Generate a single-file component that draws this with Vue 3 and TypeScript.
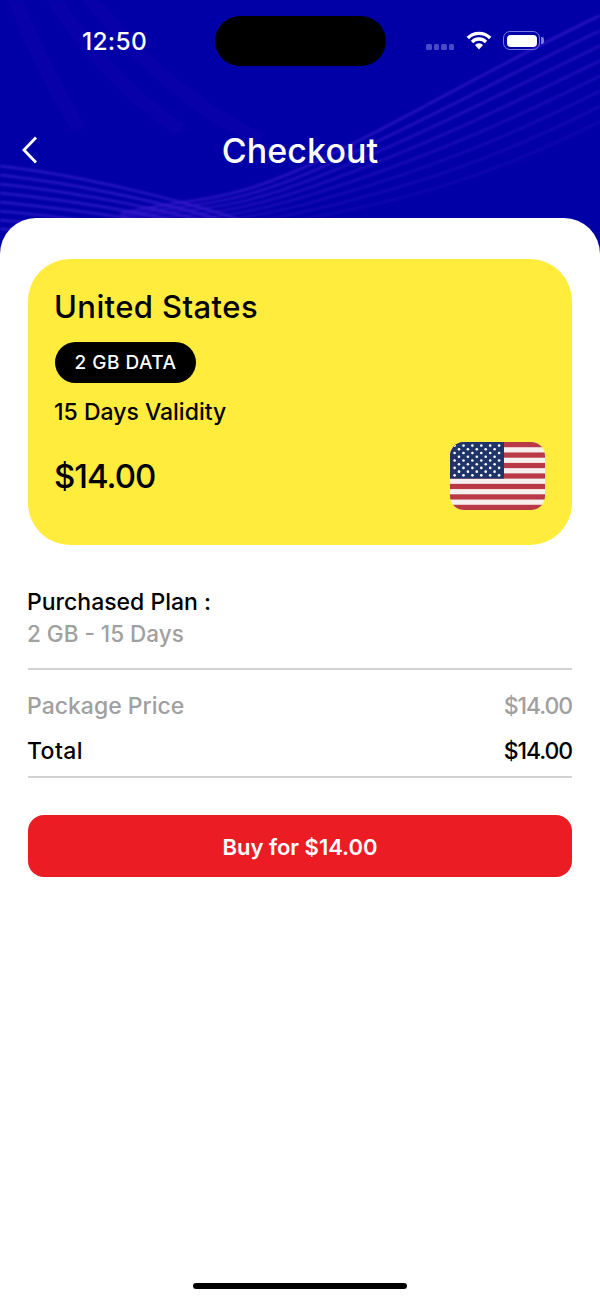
<script setup lang="ts">
const leftLines: string[] = [];
for (let i = 0; i < 8; i++) {
  leftLines.push(`M-10 ${165 + i * 9} C 60 ${172 + i * 9}, 180 ${196 + i * 6}, 300 ${240 + i * 5}`);
}
const rightLines: string[] = [];
for (let i = 0; i < 8; i++) {
  rightLines.push(`M620 ${6 + i * 15} C 500 ${62 + i * 16}, 420 ${112 + i * 12}, 320 ${160 + i * 8} S 190 ${196 + i * 5}, 120 ${214 + i * 3}`);
}
const topBands = [
  'M12 -10 C 30 40, 50 80, 80 130',
  'M48 -10 C 80 40, 120 90, 180 130',
  'M84 -10 C 130 50, 180 100, 260 140',
];
const stripes = [0, 2, 4, 6, 8, 10, 12].map((i) => (i * 68) / 13);
const stars: { x: number; y: number }[] = [];
for (let r = 0; r < 9; r++) {
  const n = r % 2 === 0 ? 6 : 5;
  for (let c = 0; c < n; c++) {
    stars.push({ x: (r % 2 === 0 ? 4.6 : 9) + c * 8.9, y: 3.6 + r * 3.72 });
  }
}
</script>

<template>
  <div class="page">
    <svg class="waves" viewBox="0 0 600 260" width="600" height="260" aria-hidden="true">
      <path v-for="(d, i) in topBands" :key="'t' + i" :d="d" fill="none" stroke="#3a08c0" stroke-width="14" stroke-opacity=".13" />
      <path v-for="(d, i) in leftLines" :key="'l' + i" :d="d" fill="none" stroke="#4a2ae0" stroke-width="2.4" stroke-opacity=".55" />
      <path v-for="(d, i) in rightLines" :key="'r' + i" :d="d" fill="none" stroke="#4a20d8" stroke-width="2.6" :stroke-opacity="0.55 - i * 0.05" />
    </svg>
    <header class="top">
      <div class="status">
        <span class="time">12:50</span>
        <div class="island"></div>
        <div class="status-icons">
          <span class="signal"><i></i><i></i><i></i><i></i></span>
          <svg class="wifi" width="26" height="19" viewBox="0 0 26 19">
            <path d="M1.8 7 A15.8 15.8 0 0 1 24.2 7 M6 11 A9.8 9.8 0 0 1 20 11" fill="none" stroke="#fff" stroke-width="3.4" />
            <path d="M9 14 A5.6 5.6 0 0 1 17 14 L13 18.6 Z" fill="#fff" />
          </svg>
          <span class="battery"><span class="charge"></span></span>
          <span class="nub"></span>
        </div>
      </div>
      <div class="nav">
        <svg class="back" width="16" height="28" viewBox="0 0 16 28">
          <path d="M14 1.5 L2 14 L14 26.5" fill="none" stroke="#fff" stroke-width="2.8" />
        </svg>
        <h1>Checkout</h1>
      </div>
    </header>

    <main class="sheet">
      <section class="card">
        <h2>United States</h2>
        <span class="pill">2 GB DATA</span>
        <p class="validity">15 Days Validity</p>
        <div class="card-foot">
          <span class="price">$14.00</span>
          <svg class="flag" width="95" height="68" viewBox="0 0 95 68">
            <rect width="95" height="68" fill="#f6f0ee" />
            <rect v-for="(y, i) in stripes" :key="i" x="0" :y="y" width="95" :height="68 / 13" fill="#b93a46" />
            <rect width="54" height="36.6" fill="#1f3468" />
            <circle v-for="(s, i) in stars" :key="i" :cx="s.x" :cy="s.y" r="1.3" fill="#fff" />
          </svg>
        </div>
      </section>

      <section class="plan">
        <div class="plan-label">Purchased Plan :</div>
        <div class="plan-value">2 GB - 15 Days</div>
      </section>

      <section class="totals">
        <div class="row muted"><span>Package Price</span><span class="amount">$14.00</span></div>
        <div class="row"><span class="total-label">Total</span><span class="amount">$14.00</span></div>
      </section>

      <button class="buy" type="button">Buy for $14.00</button>

      <div class="home"></div>
    </main>
  </div>
</template>

<style>
html, body { margin: 0; background: #fff; }
</style>

<style scoped>
* { box-sizing: border-box; }
.page {
  position: relative;
  width: 600px;
  height: 1298px;
  overflow: hidden;
  display: flex;
  flex-direction: column;
  background: #0000a6;
  font-family: Inter, "Noto Sans", sans-serif;
  color: #000;
}
.waves { position: absolute; left: 0; top: 0; filter: blur(0.8px); }
.top { position: relative; height: 218px; flex: none; color: #fff; }
.status {
  height: 116px;
  padding-top: 16px;
  display: flex;
  align-items: flex-start;
}
.time {
  width: 215px;
  padding: 10px 0 0 82px;
  font-size: 24.5px;
  line-height: 30px;
  font-weight: 500;
  letter-spacing: 0.3px;
}
.island { width: 171px; height: 50px; border-radius: 25px; background: #000; }
.status-icons {
  flex: 1;
  display: flex;
  align-items: flex-start;
  padding: 15px 0 0 40px;
}
.signal { display: flex; gap: 2px; margin-top: 13px; }
.signal i { width: 5.5px; height: 6px; border-radius: 1.5px; background: #4a4ac8; }
.wifi { margin-left: 12px; }
.battery {
  margin-left: 11px;
  width: 37px;
  height: 19px;
  padding: 2.5px;
  border: 1.5px solid #7a78e0;
  border-radius: 7px;
}
.charge { display: block; width: 100%; height: 100%; background: #fff; border-radius: 4px; }
.nub { width: 2.5px; height: 7px; margin-left: 1px; margin-top: 6px; background: #7a78e0; border-radius: 0 2px 2px 0; }
.nav {
  position: relative;
  height: 70px;
  display: flex;
  align-items: center;
  justify-content: center;
}
.back { position: absolute; left: 22px; top: 20px; }
h1 { margin: 0; font-size: 34px; line-height: 70px; font-weight: 500; letter-spacing: 0.1px; }

.sheet {
  position: relative;
  flex: 1;
  display: flex;
  flex-direction: column;
  padding: 41px 28px 0;
  background: #fff;
  border-radius: 36px 36px 0 0;
}
.card {
  height: 286px;
  padding: 27px 27px 0;
  border-radius: 42px;
  background: #ffec3d;
  display: flex;
  flex-direction: column;
  align-items: flex-start;
}
h2 { margin: 0 0 0 -1px; font-size: 31px; line-height: 42px; font-weight: 500; letter-spacing: 0.4px; }
.pill {
  margin-top: 14px;
  height: 41px;
  width: 141px;
  border-radius: 21px;
  background: #000;
  color: #fff;
  font-size: 19px;
  font-weight: 500;
  line-height: 41px;
  text-align: center;
  letter-spacing: 0.5px;
}
.validity { margin: 14px 0 0 -1px; font-size: 23px; line-height: 30px; font-weight: 500; }
.card-foot {
  margin-top: 15px;
  align-self: stretch;
  display: flex;
  justify-content: space-between;
  align-items: flex-start;
}
.price { font-size: 33px; line-height: 44px; font-weight: 500; margin: 12px 0 0 -1px; letter-spacing: -1px; }
.flag { border-radius: 14px; }

.plan { margin-top: 41px; padding-bottom: 18px; border-bottom: 2px solid #d2d2d2; }
.plan-label { font-size: 23px; line-height: 32px; font-weight: 500; margin-left: -1px; }
.plan-value { font-size: 22.5px; line-height: 32px; font-weight: 500; color: #a0a0a0; margin-left: -1px; }
.totals { padding: 14px 0 2px; border-bottom: 2px solid #d2d2d2; }
.row {
  display: flex;
  justify-content: space-between;
  font-size: 23px;
  line-height: 45px;
  font-weight: 500;
  margin-left: -1px;
}
.row.muted { color: #a0a0a0; }
.total-label { letter-spacing: 0.4px; }
.amount { letter-spacing: -1.1px; }
.buy {
  margin-top: 37px;
  height: 62px;
  padding-top: 2px;
  border: 0;
  border-radius: 16px;
  background: #ec1c25;
  color: #fff;
  font-family: inherit;
  font-size: 22px;
  font-weight: 600;
}
.home {
  position: absolute;
  left: 193px;
  bottom: 9px;
  width: 214px;
  height: 6px;
  border-radius: 3px;
  background: #000;
}
</style>
